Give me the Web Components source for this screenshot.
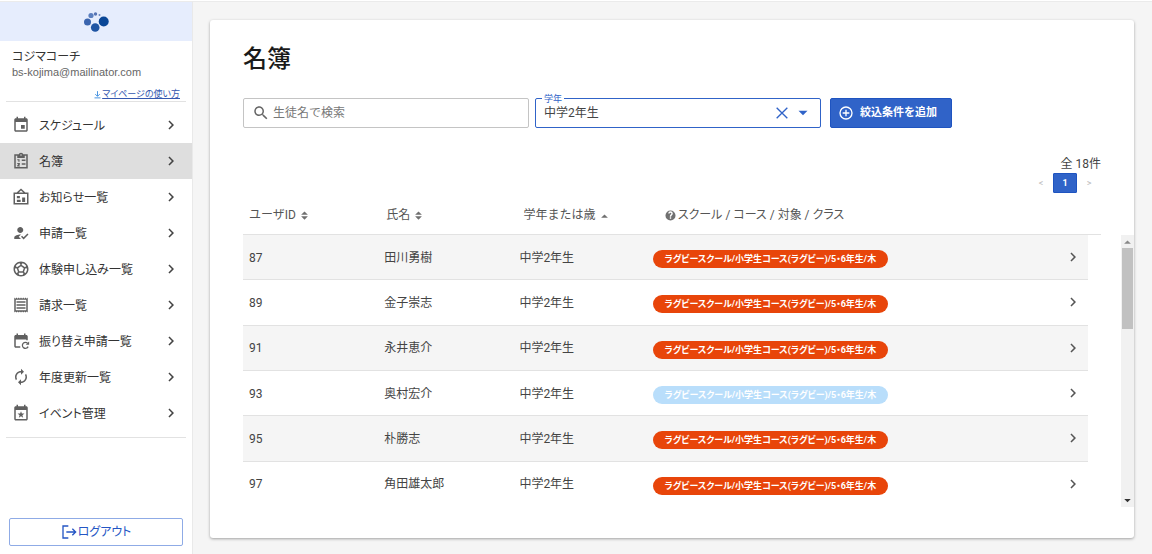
<!DOCTYPE html>
<html lang="ja">
<head>
<meta charset="utf-8">
<meta name="viewport" content="width=device-width, initial-scale=1">
<title>名簿</title>
<style>
  html, body { height: 100%; }
  body {
    margin: 0;
    background: #f5f5f5;
    color: #444;
    font: 12px/18px Roboto, "Noto Sans CJK JP", sans-serif;
    --blue: #3063c8;
    --line: #e2e2e2;
  }
</style>
</head>
<body>
<roster-app></roster-app>

<script>
const ICONS = {
  event: '<path d="M17 12h-5v5h5v-5zM16 1v2H8V1H6v2H5c-1.11 0-1.99.9-1.99 2L3 19c0 1.1.89 2 2 2h14c1.1 0 2-.9 2-2V5c0-1.1-.9-2-2-2h-1V1h-2zm3 18H5V8h14v11z"/>',
  clipboard: '<path fill="none" stroke="currentColor" stroke-width="2" d="M4 4h16v17H4z"/><path d="M7 4h2a3 3 0 0 1 6 0h2v4H7zM13 10h5v2h-5zM13 15h5v2h-5zM7 9.500h3v3.500H8.500v-2H7zM7 14.500h3.500v2L9 18h1.500v1.200H7V17.500l1.500-1.500H7z"/><circle cx="12" cy="4" r="1" fill="#dedede"/>',
  board: '<path fill="none" stroke="currentColor" stroke-width="2" d="M3 7h18v14H3zM6.500 7L12 2l5.500 5"/><path d="M6.500 10.500h4v3h-4zM6.500 15.500h5v3h-5zM13.500 12.500h4v6h-4z"/>',
  reg: '<path d="M9 17l3-2.940c-.39-.04-.68-.06-1-.06-2.670 0-8 1.340-8 4v2h9l-3-3zm2-5c2.210 0 4-1.790 4-4s-1.790-4-4-4-4 1.790-4 4 1.790 4 4 4zM15.470 20.500L12 17l1.400-1.410 2.070 2.080 5.130-5.170 1.400 1.410z"/>',
  soccer: '<path d="M12 2C6.480 2 2 6.480 2 12s4.480 10 10 10 10-4.480 10-10S17.520 2 12 2zm1 3.300l1.350-.95c1.820.56 3.370 1.760 4.380 3.340l-.39 1.340-1.350.46L13 6.700V5.300zm-3.350-.95L11 5.300v1.400L7.010 9.490l-1.350-.46-.39-1.340c1.010-1.570 2.560-2.770 4.380-3.340zM7.080 17.110l-1.140.1C4.730 15.810 4 13.990 4 12c0-.12.01-.23.02-.35l1-.73L6.400 11.400l1.460 4.340-.78 1.370zm7.420 2.480c-.79.26-1.630.41-2.500.41s-1.710-.15-2.500-.41l-.69-1.490.64-1.100h5.110l.64 1.110-.7 1.480zM14.270 15H9.730l-1.350-4.020L12 8.440l3.630 2.540L14.270 15zm3.790 2.210l-1.140-.1-.79-1.370 1.460-4.340 1.390-.47 1 .73c.01.11.02.22.02.34 0 1.990-.73 3.810-1.940 5.210z"/>',
  receipt: '<path d="M19.500 3.500L18 2l-1.500 1.500L15 2l-1.500 1.500L12 2l-1.500 1.500L9 2 7.500 3.500 6 2 4.500 3.500 3 2v20l1.500-1.500L6 22l1.500-1.500L9 22l1.500-1.500L12 22l1.500-1.500L15 22l1.500-1.500L18 22l1.500-1.500L21 22V2l-1.500 1.500zM19 19.090H5V4.910h14v14.180zM6 15h12v2H6zm0-4h12v2H6zm0-4h12v2H6z"/>',
  repeat: '<path d="M21 11V6c0-1.100-.9-2-2-2h-1V2h-2v2H8V2H6v2H5c-1.100 0-2 .9-2 2v13c0 1.100.9 2 2 2h6v-2H5V10h14v1z"/><path fill="none" stroke="currentColor" stroke-width="1.700" d="M21.500 19.500a4 4 0 1 1-.6-4.300"/><path d="M22.800 12.500v4.500h-4.500z"/>',
  renew: '<path d="M12 6v3l4-4-4-4v3c-4.420 0-8 3.580-8 8 0 1.570.46 3.030 1.240 4.260L6.700 14.800c-.45-.83-.7-1.790-.7-2.800 0-3.310 2.690-6 6-6zm6.760 1.740L17.300 9.200c.44.84.7 1.790.7 2.800 0 3.310-2.690 6-6 6v-3l-4 4 4 4v-3c4.420 0 8-3.580 8-8 0-1.570-.46-3.030-1.240-4.260z"/>',
  star: '<path d="M16 1v2H8V1H6v2H5c-1.110 0-2 .9-2 2v15c0 1.100.89 2 2 2h14c1.100 0 2-.9 2-2V5c0-1.100-.9-2-2-2h-1V1h-2zm3 19H5V8h14v12z"/><path d="M12 9.500l1.200 3.200 3.400.1-2.700 2.100 1 3.300-2.900-1.900-2.900 1.900 1-3.300-2.700-2.100 3.400-.1z"/>',
  chevron: '<path d="M10 6L8.590 7.410 13.170 12l-4.580 4.590L10 18l6-6z"/>',
  download: '<path fill="none" stroke="currentColor" stroke-width="2.500" d="M12 3v13M6 11l6 6 6-6M4 21h16"/>',
  logout: '<path fill="none" stroke="currentColor" stroke-width="2" d="M11 3H3v18h8M8 12h14M17 7l5 5-5 5"/>',
  search: '<path d="M15.500 14h-.79l-.28-.27C15.410 12.590 16 11.110 16 9.500 16 5.910 13.090 3 9.500 3S3 5.910 3 9.500 5.910 16 9.500 16c1.610 0 3.090-.59 4.230-1.570l.27.28v.79l5 4.990L20.490 19l-4.990-5zm-6 0C7.010 14 5 11.990 5 9.500S7.010 5 9.500 5 14 7.010 14 9.500 11.990 14 9.500 14z"/>',
  close: '<path fill="none" stroke="currentColor" stroke-width="2" d="M4 4l16 16M20 4L4 20"/>',
  down: '<path d="M6 9l6 6 6-6z"/>',
  plus: '<circle cx="12" cy="12" r="9" fill="none" stroke="currentColor" stroke-width="2"/><path d="M13 7h-2v4H7v2h4v4h2v-4h4v-2h-4V7z"/>',
  sort: '<path d="M3 10l9-9 9 9zM3 14l9 9 9-9z"/>',
  asc: '<path d="M3 18l9-9 9 9z"/>',
  help: '<path fill-rule="evenodd" d="M12 1a11 11 0 1 0 0 22 11 11 0 0 0 0-22zm1.500 18h-3v-3h3zm2.200-8.300c-1.300 1.300-2.200 1.800-2.200 3.800h-3c0-3 1-4 2.300-5.200.7-.7 1-1 1-1.700a1.800 1.800 0 0 0-3.600 0H7a5 5 0 0 1 10 0c0 1.200-.5 2.300-1.300 3.100z"/>'
};

function define(name, render) {
  customElements.define(name, class extends HTMLElement {
    constructor() { super(); this.attachShadow({ mode: 'open' }); }
    connectedCallback() { this.shadowRoot.innerHTML = render(this); }
  });
}

define('ui-icon', el => `
  <style>
    :host { display: block; flex: none; width: var(--size, 18px); height: var(--size, 18px); }
    svg { display: block; width: 100%; height: 100%; fill: currentColor; }
  </style>
  <svg viewBox="0 0 24 24" aria-hidden="true">${ICONS[el.getAttribute('name')]}</svg>`);

define('nav-item', el => `
  <style>
    :host { display: block; }
    a { display: flex; align-items: center; height: 36px; padding: 0 12px; color: #333; text-decoration: none; font-feature-settings: "palt"; }
    a[aria-current] { background: #dedede; }
    span { flex: 1; margin-left: 9px; padding-top: 2px; }
    ui-icon { color: #606060; }
    .go { color: #444; }
  </style>
  <a href="#"${el.hasAttribute('current') ? ' aria-current="page"' : ''}>
    <ui-icon name="${el.getAttribute('icon')}"></ui-icon>
    <span><slot></slot></span>
    <ui-icon class="go" name="chevron"></ui-icon>
  </a>`);

define('side-bar', () => `
  <style>
    :host { display: flex; flex-direction: column; box-sizing: border-box; background: #fff; border-right: 1px solid #e9e9e9; }
    .brand { display: flex; justify-content: center; align-items: center; height: 39px; background: #e6edfd; }
    .brand svg { display: block; width: 28px; height: 24px; }
    .user { margin: 0 6px; padding: 7px 6px 0; border-bottom: 1px solid var(--line); }
    .name { color: #333; font-feature-settings: "palt"; }
    .mail { color: #666; font: 11px/12px "Liberation Sans", sans-serif; }
    .guide { display: flex; justify-content: flex-end; align-items: center; margin-top: 9px; color: #3558b0; font-size: 9px; line-height: 14px; text-decoration: none; font-feature-settings: "palt"; --size: 9px; }
    .guide span { text-decoration: underline; }
    .guide ui-icon { color: #3f8fe0; }
    nav { margin-top: 5px; padding-bottom: 6px; }
    hr { width: calc(100% - 12px); margin: 0 6px; border: 0; border-top: 1px solid var(--line); box-sizing: border-box; }
    button { display: flex; justify-content: center; align-items: center; gap: 1px; height: 28px; margin: auto 9px 8px; padding: 0; background: #fff; border: 1px solid #8fabe6; border-radius: 2px; color: #2456c4; font: inherit; font-feature-settings: "palt"; --size: 16px; }
  </style>
  <div class="brand">
    <svg viewBox="0 0 28 24" aria-label="ロゴ" role="img">
      <circle cx="5.500" cy="12" r="3.500" fill="#3a64ae"/>
      <circle cx="9" cy="5.500" r="2.600" fill="#5b7fbf"/>
      <circle cx="13.500" cy="4" r="1.700" fill="#5674b4"/>
      <circle cx="17.500" cy="5" r="1" fill="#6c86bd"/>
      <circle cx="21.700" cy="11.500" r="5" fill="#0a4797"/>
      <circle cx="13.200" cy="17.500" r="4.300" fill="#1f55a3"/>
    </svg>
  </div>
  <div class="user">
    <div class="name">コジマコーチ</div>
    <div class="mail">bs-kojima@mailinator.com</div>
    <a class="guide" href="#"><ui-icon name="download"></ui-icon><span>マイページの使い方</span></a>
  </div>
  <nav>
    <nav-item icon="event">スケジュール</nav-item>
    <nav-item icon="clipboard" current>名簿</nav-item>
    <nav-item icon="board">お知らせ一覧</nav-item>
    <nav-item icon="reg">申請一覧</nav-item>
    <nav-item icon="soccer">体験申し込み一覧</nav-item>
    <nav-item icon="receipt">請求一覧</nav-item>
    <nav-item icon="repeat">振り替え申請一覧</nav-item>
    <nav-item icon="renew">年度更新一覧</nav-item>
    <nav-item icon="star">イベント管理</nav-item>
  </nav>
  <hr>
  <button type="button"><ui-icon name="logout"></ui-icon>ログアウト</button>`);

define('filter-bar', () => `
  <style>
    :host { display: flex; }
    .field { display: flex; align-items: center; position: relative; box-sizing: border-box; flex: 0 1 calc(100% / 3); min-width: 0; height: 30px; border: 1px solid #c4c4c4; border-radius: 2px; }
    .search { padding-left: 8px; color: #666; }
    input, select { flex: 1; min-width: 0; height: 100%; padding: 0 3px; border: 0; outline: 0; background: none; color: #444; font: inherit; }
    input::placeholder { color: #777; opacity: 1; }
    .grade { margin-left: 6px; padding-right: 8px; border-color: var(--blue); color: var(--blue); }
    select { appearance: none; padding: 0 8px; }
    .grade label { position: absolute; top: -6px; left: 6px; padding: 0 2px; background: #fff; font-size: 9px; line-height: 12px; }
    .clear { margin-right: 4px; padding: 0; border: 0; background: none; color: inherit; --size: 16px; }
    .add { display: flex; align-items: center; gap: 6px; height: 30px; margin-left: 9px; padding: 0 14px 0 7px; border: 1px solid #1f54c0; border-radius: 2px; background: var(--blue); color: #fff; font: inherit; font-size: 11px; font-weight: 700; white-space: nowrap; --size: 16px; }
  </style>
  <div class="field search">
    <ui-icon name="search"></ui-icon>
    <input type="text" placeholder="生徒名で検索" aria-label="生徒名で検索">
  </div>
  <div class="field grade">
    <label for="grade">学年</label>
    <select id="grade"><option>中学2年生</option></select>
    <button class="clear" type="button" aria-label="クリア"><ui-icon name="close"></ui-icon></button>
    <ui-icon name="down"></ui-icon>
  </div>
  <button class="add" type="button"><ui-icon name="plus"></ui-icon>絞込条件を追加</button>`);

define('page-nav', () => `
  <style>
    :host { display: block; text-align: right; }
    .count { line-height: 18px; padding-top: 2px; }
    nav { display: flex; justify-content: flex-end; }
    button { width: 24px; height: 20px; padding: 0; border: 0; background: none; color: #bbb; font: inherit; font-size: 9px; }
    button[aria-current] { border: 1px solid #1f54c0; border-radius: 1px; background: var(--blue); color: #fff; font-weight: 700; }
  </style>
  <div class="count">全 18件</div>
  <nav aria-label="ページ">
    <button type="button" disabled>&lt;</button>
    <button type="button" aria-current="page">1</button>
    <button type="button" disabled>&gt;</button>
  </nav>`);

define('class-chip', () => `
  <style>
    :host { display: inline-block; padding: 0 12px; border-radius: 9px; background: #e8450a; color: #fff; font-size: 9px; font-weight: 700; line-height: 18px; white-space: nowrap; font-feature-settings: "palt"; }
    :host([muted]) { background: #b9defb; }
  </style>
  <slot></slot>`);

define('scroll-track', () => `
  <style>
    :host { display: flex; flex-direction: column; background: #f1f1f1; }
    ui-icon { --size: 9px; margin: 2px; color: #888; }
    .down { --size: 13px; margin: 0; color: #333; }
    .track { flex: 1; }
    .thumb { height: 33%; margin: 0 1px; background: #c1c1c1; }
  </style>
  <ui-icon name="asc"></ui-icon>
  <div class="track"><div class="thumb"></div></div>
  <ui-icon class="down" name="down"></ui-icon>`);

const MEMBERS = [
  [87, '田川勇樹'], [89, '金子崇志'], [91, '永井恵介'],
  [93, '奥村宏介', 'muted'], [95, '朴勝志'], [97, '角田雄太郎']
];

define('member-table', () => `
  <style>
    :host { display: grid; grid-template-columns: 1fr 13px; grid-template-rows: 41px 1fr; column-gap: 20px; }
    table { grid-area: 1 / 1 / 3 / 2; display: grid; grid-template-rows: 41px 1fr; }
    thead { display: block; border-bottom: 1px solid var(--line); }
    tbody { display: grid; grid-auto-rows: 1fr; margin-right: 13px; }
    tr { display: grid; grid-template-columns: 16% 16% 16% 1fr 24px; align-items: center; }
    thead tr { height: 40px; }
    tbody tr { min-height: 40px; box-sizing: border-box; border-bottom: 1px solid var(--line); }
    tbody tr:nth-child(odd) { background: #f5f5f5; }
    tbody tr:last-child { border-bottom-color: transparent; }
    th, td { padding: 0 6px; text-align: left; font-weight: 400; white-space: nowrap; }
    td { padding-top: 1px; }
    th { display: flex; align-items: center; gap: 4px; padding-top: 2px; --size: 9px; color: #555; }
    th ui-icon { color: #707070; }
    th:nth-child(4) { padding-left: 10px; gap: 2px; --size: 11px; font-feature-settings: "palt"; }
    td:nth-child(4) { padding-left: 4px; padding-top: 3px; }
    td:last-child { padding: 0; color: #555; }
    class-chip { vertical-align: middle; }
    scroll-track { grid-area: 2 / 2; }
  </style>
  <table>
    <thead><tr>
      <th scope="col">ユーザID <ui-icon name="sort"></ui-icon></th>
      <th scope="col">氏名 <ui-icon name="sort"></ui-icon></th>
      <th scope="col">学年または歳 <ui-icon name="asc"></ui-icon></th>
      <th scope="col"><ui-icon name="help"></ui-icon> スクール / コース / 対象 / クラス</th>
    </tr></thead>
    <tbody>${MEMBERS.map(([id, name, state = '']) => `
      <tr>
        <td>${id}</td><td>${name}</td><td>中学2年生</td>
        <td><class-chip ${state}>ラグビースクール/小学生コース(ラグビー)/5・6年生/木</class-chip></td>
        <td><ui-icon name="chevron"></ui-icon></td>
      </tr>`).join('')}
    </tbody>
  </table>
  <scroll-track></scroll-track>`);

define('roster-app', () => `
  <style>
    :host { display: flex; box-sizing: border-box; min-height: 100vh; border-top: 1px solid #fff; }
    side-bar, main { border-top: 1px solid #ebebeb; }
    side-bar { flex: 0 0 193px; }
    main { flex: 1; display: flex; min-width: 0; padding: 18px 18px 16px 17px; }
    .card { flex: 1; display: flex; flex-direction: column; min-width: 0; padding: 20px 0 31px 33px; background: #fff; border-radius: 3px; box-shadow: 0 1px 3px rgba(0,0,0,.35); }
    h1 { margin: 0; color: #1a1a1a; font-size: 24px; line-height: 38px; font-weight: 500; }
    filter-bar { margin: 20px 33px 25px 0; }
    page-nav { margin-right: 33px; }
    member-table { flex: 1; margin-top: 1px; }
  </style>
  <side-bar></side-bar>
  <main>
    <section class="card">
      <h1>名簿</h1>
      <filter-bar></filter-bar>
      <page-nav></page-nav>
      <member-table></member-table>
    </section>
  </main>`);
</script>
</body>
</html>
